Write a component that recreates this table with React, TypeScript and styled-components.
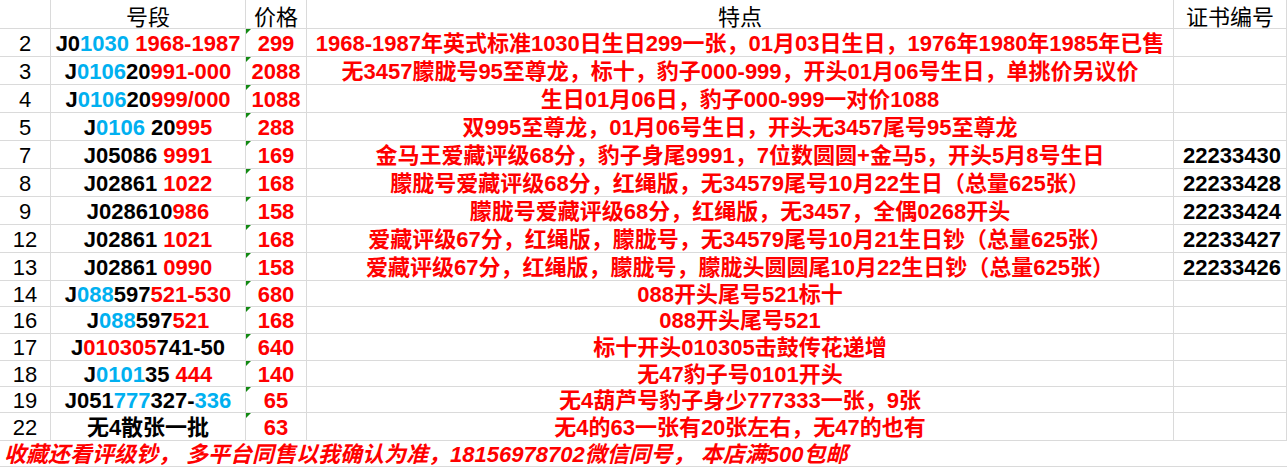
import styled, { createGlobalStyle } from 'styled-components';

const GlobalStyle = createGlobalStyle`
  html, body {
    margin: 0;
    padding: 0;
    background: #ffffff;
  }
  body {
    font-family: 'Liberation Sans', 'Noto Sans CJK SC', sans-serif;
  }
`;

const RED = '#ff0000';
const BLUE = '#00b0f0';
const BLACK = '#000000';
const GRID = '#dadada';

type Seg = [string, 'k' | 'b' | 'r'];

interface Row {
  num: string;
  code: Seg[];
  price: string;
  note: string;
  cert?: string;
  h: number;
}

const COLORS = { k: BLACK, b: BLUE, r: RED };

const ROWS: Row[] = [
  { num: '2', code: [['J0', 'k'], ['1030', 'b'], [' 1968-1987', 'r']], price: '299', note: '1968-1987年英式标准1030日生日299一张，01月03日生日，1976年1980年1985年已售', h: 28 },
  { num: '3', code: [['J', 'k'], ['0106', 'b'], ['20', 'k'], ['991-000', 'r']], price: '2088', note: '无3457朦胧号95至尊龙，标十，豹子000-999，开头01月06号生日，单挑价另议价', h: 28 },
  { num: '4', code: [['J', 'k'], ['0106', 'b'], ['20', 'k'], ['999/000', 'r']], price: '1088', note: '生日01月06日，豹子000-999一对价1088', h: 28 },
  { num: '5', code: [['J', 'k'], ['0106', 'b'], [' 20', 'k'], ['995', 'r']], price: '288', note: '双995至尊龙，01月06号生日，开头无3457尾号95至尊龙', h: 28 },
  { num: '7', code: [['J05086 ', 'k'], ['9991', 'r']], price: '169', note: '金马王爱藏评级68分，豹子身尾9991，7位数圆圆+金马5，开头5月8号生日', cert: '22233430', h: 28 },
  { num: '8', code: [['J02861 ', 'k'], ['1022', 'r']], price: '168', note: '朦胧号爱藏评级68分，红绳版，无34579尾号10月22生日（总量625张）', cert: '22233428', h: 28 },
  { num: '9', code: [['J028610', 'k'], ['986', 'r']], price: '158', note: '朦胧号爱藏评级68分，红绳版，无3457，全偶0268开头', cert: '22233424', h: 28 },
  { num: '12', code: [['J02861 ', 'k'], ['1021', 'r']], price: '168', note: '爱藏评级67分，红绳版，朦胧号，无34579尾号10月21生日钞（总量625张）', cert: '22233427', h: 28 },
  { num: '13', code: [['J02861 ', 'k'], ['0990', 'r']], price: '158', note: '爱藏评级67分，红绳版，朦胧号，朦胧头圆圆尾10月22生日钞（总量625张）', cert: '22233426', h: 28 },
  { num: '14', code: [['J', 'k'], ['088', 'b'], ['597', 'k'], ['521-530', 'r']], price: '680', note: '088开头尾号521标十', h: 26 },
  { num: '16', code: [['J', 'k'], ['088', 'b'], ['597', 'k'], ['521', 'r']], price: '168', note: '088开头尾号521', h: 27 },
  { num: '17', code: [['J', 'k'], ['010305', 'r'], ['741-50', 'k']], price: '640', note: '标十开头010305击鼓传花递增', h: 27 },
  { num: '18', code: [['J', 'k'], ['0101', 'b'], ['35 ', 'k'], ['444', 'r']], price: '140', note: '无47豹子号0101开头', h: 26 },
  { num: '19', code: [['J051', 'k'], ['777', 'b'], ['327-', 'k'], ['336', 'b']], price: '65', note: '无4葫芦号豹子身少777333一张，9张', h: 26 },
  { num: '22', code: [['无4散张一批', 'k']], price: '63', note: '无4的63一张有20张左右，无47的也有', h: 28 },
];

const Sheet = styled.div`
  display: grid;
  grid-template-columns: 51px 195px 61px 867px 113px;
  width: 1287px;
  font-size: 22px;
`;

const Cell = styled.div<{ $h: number; $align?: 'left' | 'center' | 'right' }>`
  box-sizing: border-box;
  height: ${({ $h }) => $h}px;
  border-right: 1px solid ${GRID};
  border-bottom: 1px solid ${GRID};
  display: flex;
  align-items: center;
  justify-content: ${({ $align }) =>
    $align === 'left' ? 'flex-start' : $align === 'right' ? 'flex-end' : 'center'};
  padding: 2px 5px 0;
  white-space: nowrap;
  overflow: visible;
  position: relative;
  line-height: 1;
`;

const HeadText = styled.span`
  font-family: 'Noto Sans CJK SC', sans-serif;
  font-weight: 400;
  color: #000;
  font-size: 22px;
`;

const RowNum = styled.span`
  color: #000;
`;

const Code = styled.span`
  color: #000;
  font-weight: 700;
`;

const Part = styled.span<{ $c: string }>`
  color: ${({ $c }) => $c};
  white-space: pre;
`;

const Price = styled.span`
  color: ${RED};
  font-weight: 700;
`;

const Note = styled.span`
  color: ${RED};
  font-weight: 700;
`;

const Cert = styled.span`
  color: #000;
  font-weight: 700;
`;

const Marker = styled.span`
  position: absolute;
  top: 0;
  left: 0;
  width: 0;
  height: 0;
  border-top: 5px solid #138a13;
  border-right: 5px solid transparent;
`;

const Footer = styled.div`
  grid-column: 1 / -1;
  box-sizing: border-box;
  height: 26px;
  border-bottom: 1px solid ${GRID};
  display: flex;
  align-items: center;
  padding: 2px 4px 0;
  color: ${RED};
  font-weight: 700;
  font-style: italic;
  white-space: pre;
  line-height: 1;
`;

export default function App() {
  return (
    <>
      <GlobalStyle />
      <Sheet>
        <Cell $h={29} />
        <Cell $h={29}><HeadText>号段</HeadText></Cell>
        <Cell $h={29}><HeadText>价格</HeadText></Cell>
        <Cell $h={29}><HeadText>特点</HeadText></Cell>
        <Cell $h={29}><HeadText>证书编号</HeadText></Cell>
        {ROWS.map((r) => (
          <>
            <Cell key={r.num + 'n'} $h={r.h}><RowNum>{r.num}</RowNum></Cell>
            <Cell key={r.num + 'c'} $h={r.h}>
              <Code>
                {r.code.map(([t, c], i) => (
                  <Part key={i} $c={COLORS[c]}>{t}</Part>
                ))}
              </Code>
            </Cell>
            <Cell key={r.num + 'p'} $h={r.h}>
              <Marker />
              <Price>{r.price}</Price>
            </Cell>
            <Cell key={r.num + 'f'} $h={r.h}><Note>{r.note}</Note></Cell>
            <Cell key={r.num + 'z'} $h={r.h} $align="right"><Cert>{r.cert}</Cert></Cell>
          </>
        ))}
        <Footer>收藏还看评级钞， 多平台同售以我确认为准，18156978702微信同号， 本店满500包邮</Footer>
      </Sheet>
    </>
  );
}
